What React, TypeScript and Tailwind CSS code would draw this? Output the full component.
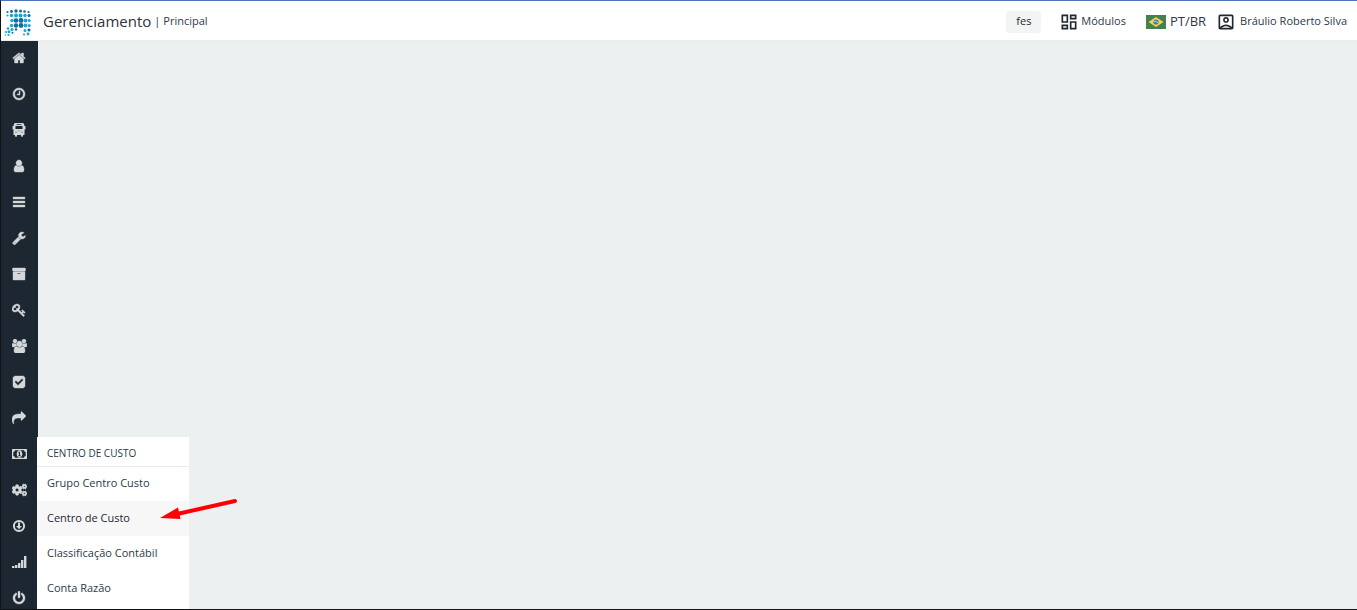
import type { ReactNode } from "react";
import { MdOutlineAccountBox, MdOutlineDashboard } from "react-icons/md";
import { FaCogs } from "react-icons/fa";

function Glyph({ d, box = "0 0 1792 1792", wide = false }: { d: string; box?: string; wide?: boolean }) {
  return (
    <svg
      viewBox={box}
      className={wide ? "h-3.5 w-[15px]" : "size-3.5"}
      fill="currentColor"
      stroke="currentColor"
      strokeWidth="50"
      aria-hidden="true"
    >
      <path d={d} />
    </svg>
  );
}

const paths = {
  home: "M1472 992v480q0 26-19 45t-45 19h-384v-384h-256v384h-384q-26 0-45-19t-19-45v-480q0-1 .5-3t.5-3l575-474 575 474q1 2 1 6zm223-69l-62 74q-8 9-21 11h-3q-13 0-21-7l-692-577-692 577q-12 8-24 7-13-2-21-11l-62-74q-8-10-7-23.5t11-21.5l719-599q32-26 76-26t76 26l244 204v-195q0-14 9-23t23-9h192q14 0 23 9t9 23v408l219 182q10 8 11 21.5t-7 23.5z",
  clock: "M1024 544v448q0 14-9 23t-23 9h-320q-14 0-23-9t-9-23v-64q0-14 9-23t23-9h224v-352q0-14 9-23t23-9h64q14 0 23 9t9 23zm416 352q0-148-73-273t-198-198-273-73-273 73-198 198-73 273 73 273 198 198 273 73 273-73 198-198 73-273zm224 0q0 209-103 385.5t-279.5 279.5-385.5 103-385.5-103-279.5-279.5-103-385.5 103-385.5 279.5-279.5 385.5-103 385.5 103 279.5 279.5 103 385.5z",
  user: "M1536 1399q0 109-62.5 187t-150.5 78h-854q-88 0-150.5-78t-62.5-187q0-85 8.5-160.5t31.5-152 58.5-131 94-89 134.5-34.5q131 128 313 128t313-128q76 0 134.5 34.5t94 89 58.5 131 31.5 152 8.5 160.5zm-256-887q0 159-112.5 271.5t-271.5 112.5-271.5-112.5-112.5-271.5 112.5-271.5 271.5-112.5 271.5 112.5 112.5 271.5z",
  bars: "M1664 1344v128q0 26-19 45t-45 19h-1408q-26 0-45-19t-19-45v-128q0-26 19-45t45-19h1408q26 0 45 19t19 45zm0-512v128q0 26-19 45t-45 19h-1408q-26 0-45-19t-19-45v-128q0-26 19-45t45-19h1408q26 0 45 19t19 45zm0-512v128q0 26-19 45t-45 19h-1408q-26 0-45-19t-19-45v-128q0-26 19-45t45-19h1408q26 0 45 19t19 45z",
  wrench: "M448 1472q0-26-19-45t-45-19-45 19-19 45 19 45 45 19 45-19 19-45zm644-420l-682 682q-37 37-90 37-52 0-91-37l-106-108q-38-36-38-90 0-53 38-91l681-681q39 98 114.5 173.5t173.5 114.5zm634-435q0 39-23 106-47 134-164.5 217.5t-258.5 83.5q-185 0-316.5-131.5t-131.5-316.5 131.5-316.5 316.5-131.5q58 0 121.5 16.5t107.5 46.5q16 11 16 28t-16 28l-293 169v224l193 107q5-3 79-48.5t135.5-81 70.5-35.5q15 0 23.5 10t8.5 25z",
  archive: "M1088 832q0-26-19-45t-45-19h-256q-26 0-45 19t-19 45 19 45 45 19h256q26 0 45-19t19-45zm576-192v960q0 26-19 45t-45 19h-1408q-26 0-45-19t-19-45v-960q0-26 19-45t45-19h1408q26 0 45 19t19 45zm64-448v256q0 26-19 45t-45 19h-1536q-26 0-45-19t-19-45v-256q0-26 19-45t45-19h1536q26 0 45 19t19 45z",
  key: "M832 512q0-80-56-136t-136-56-136 56-56 136q0 42 19 83-41-19-83-19-80 0-136 56t-56 136 56 136 136 56 136-56 56-136q0-42-19-83 41 19 83 19 80 0 136-56t56-136zm851 704q0 17-49 66t-66 49q-9 0-28.5-16t-36.5-33-38.5-40-24.5-26l-96 96 220 220q28 28 28 68 0 42-39 81t-81 39q-40 0-68-28l-671-671q-176 131-365 131-163 0-265.5-102.5t-102.5-265.5q0-160 95-313t248-248 313-95q163 0 265.5 102.5t102.5 265.5q0 189-131 365l355 355 96-96q-3-3-26-24.5t-40-38.5-33-36.5-16-28.5q0-17 49-66t66-49q13 0 23 10 6 6 46 44.5t82 79.5 86.5 86 73 78 28.5 41z",
  group: "M593 896q-162 5-265 128h-134q-82 0-138-40.5t-56-118.5q0-353 124-353 6 0 43.5 21t97.5 42.5 119 21.5q67 0 133-23-5 37-5 66 0 139 81 256zm1071 637q0 120-73 189.5t-194 69.5h-874q-121 0-194-69.5t-73-189.5q0-53 3.5-103.5t14-109 26.5-108.5 43-97.5 62-81 85.5-53.5 111.5-20q10 0 43 21.5t73 48 107 48 135 21.5 135-21.5 107-48 73-48 43-21.5q61 0 111.5 20t85.5 53.5 62 81 43 97.5 26.5 108.5 14 109 3.5 103.5zm-1024-1277q0 106-75 181t-181 75-181-75-75-181 75-181 181-75 181 75 75 181zm704 384q0 159-112.5 271.5t-271.5 112.5-271.5-112.5-112.5-271.5 112.5-271.5 271.5-112.5 271.5 112.5 112.5 271.5zm576 225q0 78-56 118.5t-138 40.5h-134q-103-123-265-128 81-117 81-256 0-29-5-66 66 23 133 23 59 0 119-21.5t97.5-42.5 43.5-21q124 0 124 353zm-128-609q0 106-75 181t-181 75-181-75-75-181 75-181 181-75 181 75 75 181z",
  check: "M813 1299l614-614q19-19 19-45t-19-45l-102-102q-19-19-45-19t-45 19l-467 467-211-211q-19-19-45-19t-45 19l-102 102q-19 19-19 45t19 45l358 358q19 19 45 19t45-19zm851-883v960q0 119-84.5 203.5t-203.5 84.5h-960q-119 0-203.5-84.5t-84.5-203.5v-960q0-119 84.5-203.5t203.5-84.5h960q119 0 203.5 84.5t84.5 203.5z",
  share: "M1792 640q0 26-19 45l-512 512q-19 19-45 19t-45-19-19-45v-256h-224q-98 0-175.5 6t-154 21.5-133 42.5-105.5 69.5-80 101-48.5 138.5-17.5 181q0 55 5 123 0 6 2.5 23.5t2.5 26.5q0 15-8.5 25t-23.5 10q-16 0-28-17-7-9-13-22t-13.5-30-10.5-24q-127-285-127-451 0-199 53-333 162-403 875-403h224v-256q0-26 19-45t45-19 45 19l512 512q19 19 19 45z",
  power: "M1664 896q0 156-61 298t-164 245-245 164-298 61-298-61-245-164-164-245-61-298q0-182 80.5-343t226.5-270q43-32 95.5-25t83.5 50q32 42 24.5 94.5t-49.5 84.5q-98 74-151.5 181t-53.5 228q0 104 40.5 198.5t109.5 163.5 163.5 109.5 198.5 40.5 198.5-40.5 163.5-109.5 109.5-163.5 40.5-198.5q0-121-53.5-228t-151.5-181q-42-32-49.5-84.5t24.5-94.5q31-43 84-50t95 25q146 109 226.5 270t80.5 343zm-640-768v640q0 52-38 90t-90 38-90-38-38-90v-640q0-52 38-90t90-38 90 38 38 90z",
};

function BusIcon() {
  return (
    <svg viewBox="0 0 14 14" className="size-3.5" aria-hidden="true">
      <path fill="currentColor" fillRule="evenodd" d="M3.5 0h7Q12.300 .2 12.300 2v1h.6q.6 0 .6.6v2.2q0 .6-.6.6H12.500V12H11v1q0 .8-.8.8h-.4Q9 13.800 9 13v-1H5v1q0 .8-.8.8h-.4Q3 13.800 3 13v-1H1.500V6.400h-.4q-.6 0-.6-.6V3.600q0-.6.6-.6H1.700V2Q1.700 .2 3.500 0zM4.500 1v.8h5V1zM3.500 3v3h7V3z" />
      <path d="M3 8.700h2v1H3zM9 8.700h2v1H9zM5.500 7.500h3v.8h-3z" fill="#8d959b" />
    </svg>
  );
}

function MoneyIcon() {
  return (
    <svg viewBox="0 0 15 14" className="h-3.5 w-[15px]" aria-hidden="true">
      <path fill="currentColor" fillRule="evenodd" d="M.5 2h14q.5 0 .5.5v9q0 .5-.5.5H.5q-.5 0-.5-.5v-9Q0 2 .5 2zM3 3.200Q3 5 1.300 5v4q1.700 0 1.700 1.800h9q0-1.800 1.700-1.800V5q-1.700 0-1.700-1.800z" />
      <path fill="currentColor" fillRule="evenodd" d="M7.500 3.300c1.700 0 2.800 1.800 2.800 3.700s-1.100 3.700-2.800 3.700S4.700 8.900 4.700 7s1.100-3.700 2.800-3.700zM7.200 4.800 6 5.900l.5.6.5-.4v2.400H6v.8h3v-.8H8V4.800z" />
    </svg>
  );
}

function DownloadIcon() {
  return (
    <svg viewBox="0 0 14 14" className="size-3.5" aria-hidden="true">
      <circle cx="7" cy="7" r="5.100" fill="none" stroke="currentColor" strokeWidth="2" />
      <path fill="currentColor" d="M6 3.500h2V7h2L7 10.200 4 7h2z" />
    </svg>
  );
}

function SignalIcon() {
  return (
    <svg viewBox="0 0 15 14" className="h-3.5 w-[15px]" fill="currentColor" aria-hidden="true">
      <path d="M0 11h2.400v2H0zM3 10h2.400v3H3zM6 8h2.400v5H6zM9 5h2.400v8H9zM12 1h2.400v12H12z" />
    </svg>
  );
}

const navItems: { label: string; icon: ReactNode }[] = [
  { label: "Início", icon: <Glyph d={paths.home} /> },
  { label: "Horários", icon: <Glyph d={paths.clock} /> },
  { label: "Veículos", icon: <BusIcon /> },
  { label: "Usuário", icon: <Glyph d={paths.user} /> },
  { label: "Listas", icon: <Glyph d={paths.bars} /> },
  { label: "Manutenção", icon: <Glyph d={paths.wrench} /> },
  { label: "Arquivo", icon: <Glyph d={paths.archive} /> },
  { label: "Acessos", icon: <Glyph d={paths.key} /> },
  { label: "Grupos", icon: <Glyph d={paths.group} box="0 0 1920 1792" wide /> },
  { label: "Tarefas", icon: <Glyph d={paths.check} /> },
  { label: "Encaminhar", icon: <Glyph d={paths.share} /> },
  { label: "Centro de Custo", icon: <MoneyIcon /> },
  { label: "Configurações", icon: <FaCogs className="h-4 w-[15px] stroke-current [stroke-width:24px]" /> },
  { label: "Downloads", icon: <DownloadIcon /> },
  { label: "Relatórios", icon: <SignalIcon /> },
  { label: "Sair", icon: <Glyph d={paths.power} /> },
];

const menuItems = ["Grupo Centro Custo", "Centro de Custo", "Classificação Contábil", "Conta Razão"];

/* Each dot: x, y, radius, shade index */
const dots: [number, number, number, number][] = [
  [3.5, 3, 1.100, 0], [7.500, 2.500, 1.400, 0], [12, 2, 1.700, 0], [16.500, 2, 1.500, 0], [20.500, 2.500, 1.300, 0], [24.500, 3, 1.100, 0],
  [3.500, 6.500, 1.100, 1], [7.500, 6.500, 1.700, 1], [12, 6.500, 2, 1], [16.500, 6.500, 2, 1], [21, 6.500, 1.700, 1], [25, 6.500, 1.500, 0],
  [8, 11.500, 1.700, 1], [12, 11.500, 2.300, 0], [17, 11.500, 2.400, 0], [21.500, 11.500, 1.900, 1], [25.200, 11.500, 1.500, 1],
  [7.500, 16.500, 1.700, 1], [12, 16.500, 2.200, 0], [17, 16.500, 2.400, 0], [21.500, 16.500, 1.900, 1], [25.200, 16.500, 1.500, 1],
  [4, 19.500, 1.300, 1], [8, 20.500, 1.600, 1], [12, 20.500, 1.200, 0], [21, 21.500, 1.500, 1], [25, 21, 1.500, 0],
  [2, 23, 1.100, 1], [5, 22.800, 1.500, 1], [8.500, 23.700, 1, 0], [20, 25.500, 1, 1], [24, 25, 1.400, 1],
  [1.500, 26, 0.700, 1], [4.500, 26, 1.100, 1],
];

function Logo() {
  return (
    <svg viewBox="0 0 28 28" className="size-7" aria-hidden="true">
      {dots.map(([x, y, r, shade]) => (
        <circle key={`${x}-${y}`} cx={x} cy={y} r={r} fill={shade ? "#19a5d5" : "#126d9c"} />
      ))}
    </svg>
  );
}

function BrazilFlag() {
  return (
    <svg viewBox="0 0 20 14" className="h-3.5 w-5" aria-hidden="true">
      <path fill="#43814f" d="M0 0h20v14H0z" />
      <path fill="#f2d544" d="M10 2l7.500 5-7.500 5-7.500-5z" />
      <circle cx="10" cy="7" r="2.600" fill="#3b7fb5" />
      <path d="M7.700 6.200q2.700-.2 4.500 1.800" fill="none" stroke="#cfe3ee" strokeWidth=".8" />
    </svg>
  );
}

function CostCenterMenu() {
  return (
    <div className="absolute top-0 left-9 z-10 h-44 w-[152px] bg-white text-[#2b3a48]">
      <h2 className="flex h-[29px] items-center px-2.5 pt-1 text-[10px] shadow-[0_1px_0_#e9eaea]">CENTRO DE CUSTO</h2>
      <ul>
        {menuItems.map((item) => (
          <li key={item}>
            <a
              href="#"
              className={
                item === "Centro de Custo"
                  ? "flex h-[35px] items-center bg-[#f7f7f7] px-2.5 text-[11px] text-[#1d2833]"
                  : "flex h-[35px] items-center px-2.5 text-[11px]"
              }
            >
              {item}
            </a>
          </li>
        ))}
      </ul>
      <svg viewBox="0 0 80 26" className="pointer-events-none absolute top-[60px] left-[122px] h-[26px] w-20" aria-hidden="true">
        <path d="M76 4L18 17" stroke="#ff0000" strokeWidth="4" strokeLinecap="round" />
        <path d="M1 21L19 10.500 21.500 22z" fill="#ff0000" />
      </svg>
    </div>
  );
}

export default function App() {
  return (
    <div className="flex h-screen flex-col overflow-hidden border-t border-b border-l border-t-[#4a74b4] border-b-[#101214] border-l-[#101214] bg-[#ecf0f1] font-['Open_Sans',sans-serif] text-[#2b3a48]">
      <header className="flex h-10 shrink-0 items-center justify-between border-b border-[#e9eded] bg-white pt-0.5 pr-2.5 pl-[3px]">
        <div className="flex items-center">
          <a href="#" aria-label="Página inicial" className="mt-0.5 mr-[11px]">
            <Logo />
          </a>
          <h1 className="text-[15px] text-[#2d3339]">Gerenciamento</h1>
          <span className="mx-[3px] text-[11px]">|</span>
          <a href="#" className="text-[11px]">Principal</a>
        </div>
        <div className="flex items-center text-[11px]">
          <button type="button" className="mr-[18px] flex h-[22px] w-[35px] items-center justify-center rounded-[3px] bg-[#f3f4f4] font-medium text-[#222a31]">
            fes
          </button>
          <a href="#" className="mr-5 flex items-center gap-0.5">
            <MdOutlineDashboard className="size-5 text-[#22282e]" />
            Módulos
          </a>
          <button type="button" className="mr-2.5 flex items-center gap-1 text-[13px]">
            <BrazilFlag />
            PT/BR
          </button>
          <a href="#" className="flex items-center gap-1">
            <MdOutlineAccountBox className="size-5 text-[#22282e]" />
            Bráulio Roberto Silva
          </a>
        </div>
      </header>
      <div className="flex min-h-0 flex-1">
        <nav className="w-[37px] shrink-0 bg-[#1d2731]" aria-label="Menu principal">
          <ul>
            {navItems.map((item) => (
              <li key={item.label} className="relative">
                <a href="#" aria-label={item.label} className="flex h-9 items-center pb-0.5 pl-[11px] text-[#d5d8da]">
                  {item.icon}
                </a>
                {item.label === "Centro de Custo" && <CostCenterMenu />}
              </li>
            ))}
          </ul>
        </nav>
        <main className="flex-1" />
      </div>
    </div>
  );
}
